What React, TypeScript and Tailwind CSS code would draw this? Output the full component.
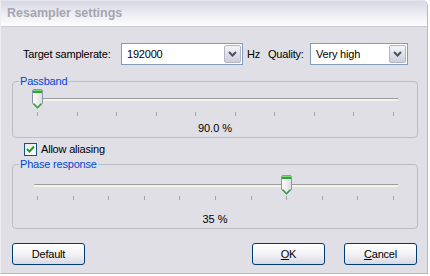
import React from "react";

const font = { fontFamily: '"Liberation Sans", Arial, sans-serif' };

function Chevron() {
  return (
    <svg width="9" height="6" viewBox="0 0 9 6">
      <polyline points="1,1 4.5,4.5 8,1" fill="none" stroke="#4a4e66" strokeWidth="2" />
    </svg>
  );
}

function Combo({ value, width }: { value: string; width: string }) {
  return (
    <div className={`${width} h-[22px] bg-white border border-[#7f9db9] flex items-center`}>
      <span className="flex-1 pl-[5px] text-[11px] text-black">{value}</span>
      <div className="w-[17px] h-[18px] mr-[1px] rounded-[2px] border border-[#b4b6c8] bg-gradient-to-b from-[#f4f4f8] to-[#cdcedb] flex items-center justify-center">
        <Chevron />
      </div>
    </div>
  );
}

function Thumb() {
  return (
    <svg width="11" height="20" viewBox="0 0 11 20">
      <defs>
        <linearGradient id="tg" x1="0" y1="0" x2="1" y2="0">
          <stop offset="0" stopColor="#ffffff" />
          <stop offset="1" stopColor="#dcdce4" />
        </linearGradient>
      </defs>
      <path d="M0.5,2 Q0.5,0.5 2,0.5 H9 Q10.5,0.5 10.5,2 V14.5 L5.5,19.5 L0.5,14.5 Z" fill="url(#tg)" stroke="#8a96a8" />
      <rect x="1" y="1" width="9" height="3" fill="#2fa32f" />
      <rect x="1" y="1" width="9" height="1" fill="#7ed67e" />
      <polyline points="1.5,14.5 5.5,18.5 9.5,14.5" fill="none" stroke="#3aa83a" strokeWidth="1.5" />
    </svg>
  );
}

function Slider({
  ticks,
  thumbLeft,
  tickGap,
  label,
  labelGap,
}: {
  ticks: number;
  thumbLeft: number;
  tickGap: string;
  label: string;
  labelGap: string;
}) {
  return (
    <div className="flex flex-col">
      <div className="relative ml-[21px] mr-[19px] h-[20px]">
        <div className="absolute left-0 right-0 top-[9px] h-[3px] border-t border-[#9c9c9c] bg-[#f5f4ea] rounded-l-[1px]" />
        <div className="absolute top-0" style={{ left: thumbLeft }}>
          <Thumb />
        </div>
      </div>
      <div className={`${tickGap} ml-[21px] mr-[19px] pl-[3px] pr-[4px] h-[4px] flex justify-between`}>
        {Array.from({ length: ticks }).map((_, i) => (
          <div key={i} className="w-px h-[4px] bg-[#a4a4a4]" />
        ))}
      </div>
      <div className={`${labelGap} text-center text-[11px] leading-[13px] text-black`}>{label}</div>
    </div>
  );
}

function Group({ title, children, pb }: { title: string; children: React.ReactNode; pb: string }) {
  return (
    <fieldset className={`mx-[11px] w-[406px] border border-[#bdbdc6] rounded-[4px] ${pb}`}>
      <legend className="ml-[6px] px-[1px] text-[11px] leading-[12px] text-[#0046d5] tracking-[-0.2px]">{title}</legend>
      {children}
    </fieldset>
  );
}

function Button({ children }: { children: React.ReactNode }) {
  return (
    <div className="w-[73px] h-[22px] rounded-[3px] border border-[#003c74] bg-gradient-to-b from-[#ffffff] via-[#f3f3f7] to-[#d8d8e2] flex items-center justify-center text-[11px] text-black tracking-[-0.2px]">
      {children}
    </div>
  );
}

export default function App() {
  return (
    <div className="w-[430px] h-[276px] bg-white" style={font}>
      <div className="w-[428px] h-[274px] bg-[#e0dfe6] border-l border-l-[#ececf1] border-r border-r-[#b8b8c4] border-b border-b-[#b8b8c4] rounded-tr-[6px] flex flex-col">
        <div className="h-[27px] rounded-tr-[6px] border-t border-[#e4e4ec] border-b border-b-[#cbcbd7] bg-gradient-to-b from-[#d7d7e3] via-[#ececf3] to-[#fdfdfe] flex items-center pl-[6px]">
          <span className="text-[12.5px] font-bold text-[#a6a6ae]">Resampler settings</span>
        </div>

        <div className="mt-[16px] h-[22px] flex items-center text-[11px] text-black tracking-[-0.2px]">
          <span className="ml-[22px] w-[98px]">Target samplerate:</span>
          <Combo value="192000" width="w-[122px]" />
          <span className="ml-[4px] w-[21px]">Hz</span>
          <span className="w-[42px]">Quality:</span>
          <Combo value="Very high" width="w-[98px]" />
        </div>

        <div className="mt-[10px]">
          <Group title="Passband" pb="pb-[2px]">
            <div className="mt-[2px]">
              <Slider ticks={10} thumbLeft={-2} tickGap="mt-[3px]" label="90.0 %" labelGap="mt-[6px]" />
            </div>
          </Group>
        </div>

        <div className="mt-[5px] ml-[23px] h-[13px] flex items-center">
          <div className="w-[13px] h-[13px] border border-[#1c5180] bg-gradient-to-br from-[#ececE6] to-[#ffffff] flex items-center justify-center">
            <svg width="9" height="9" viewBox="0 0 9 9">
              <polyline points="1,4 3.5,6.5 8,1.5" fill="none" stroke="#21a121" strokeWidth="2" />
            </svg>
          </div>
          <span className="ml-[4px] text-[11px] text-black tracking-[-0.2px]">Allow aliasing</span>
        </div>

        <div className="mt-[2px]">
          <Group title="Phase response" pb="pb-[2px]">
            <div className="mt-[5px]">
              <Slider ticks={11} thumbLeft={247} tickGap="mt-[1px]" label="35 %" labelGap="mt-[13px]" />
            </div>
          </Group>
        </div>

        <div className="mt-[14px] flex items-center">
          <div className="ml-[11px]">
            <Button>Default</Button>
          </div>
          <div className="ml-[167px]">
            <Button>
              <span>
                <span className="underline">O</span>K
              </span>
            </Button>
          </div>
          <div className="ml-[19px]">
            <Button>
              <span>
                <span className="underline">C</span>ancel
              </span>
            </Button>
          </div>
        </div>
      </div>
    </div>
  );
}
